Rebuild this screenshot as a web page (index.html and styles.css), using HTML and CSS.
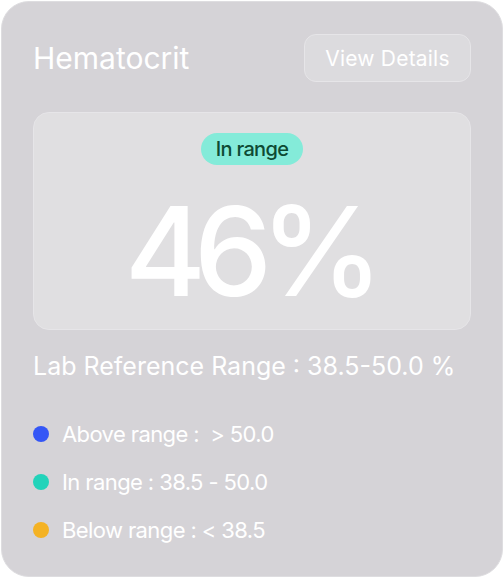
FILE: index.html
```html
<!DOCTYPE html>
<html>
<head>
<meta charset="utf-8">
<link rel="stylesheet" href="styles.css">
</head>
<body>
<div class="card">
  <div class="header">
    <h1 class="title">Hematocrit</h1>
    <button class="details">View Details</button>
  </div>
  <div class="value-box">
    <span class="badge">In range</span>
    <div class="value">46%</div>
  </div>
  <div class="ref">Lab Reference Range : 38.5-50.0 %</div>
  <ul class="legend">
    <li><span class="dot dot-above"></span>Above range :&nbsp; &gt; 50.0</li>
    <li><span class="dot dot-in"></span>In range : 38.5 - 50.0</li>
    <li><span class="dot dot-below"></span>Below range : &lt; 38.5</li>
  </ul>
</div>
</body>
</html>
```
FILE: styles.css
```css
* { box-sizing: border-box; }
html, body { margin: 0; padding: 0; background: #ffffff; }
body { font-family: Inter, "Noto Sans", sans-serif; padding: 1px; }
.card {
  width: 502px;
  height: 576px;
  background: #d5d3d7;
  border: 1px solid #dedde0;
  border-radius: 28px;
  padding: 30px 31px 0 31px;
  color: #ffffff;
}
.header {
  display: flex;
  justify-content: space-between;
  align-items: center;
  height: 52px;
}
.title {
  margin: 0;
  font-size: 30px;
  font-weight: 400;
  letter-spacing: 0;
  color: #ffffff;
}
.details {
  font-family: inherit;
  width: 167px;
  height: 48px;
  background: #dcdbde;
  border: 1.5px solid #e6e5e8;
  border-radius: 12px;
  color: #ffffff;
  font-size: 21px;
  letter-spacing: 0.2px;
  font-weight: 400;
  padding: 0;
}
.value-box {
  margin-top: 28px;
  height: 218px;
  background: #e0dfe1;
  border: 1.5px solid #e6e5e8;
  border-radius: 16px;
  display: flex;
  flex-direction: column;
  align-items: center;
  padding-top: 20px;
}
.badge {
  background: #84ebd9;
  color: #0e4a33;
  font-size: 20px;
  font-weight: 500;
  letter-spacing: -0.7px;
  border-radius: 16px;
  height: 32px;
  line-height: 32px;
  padding: 0 15px;
}
.value {
  font-size: 124px;
  line-height: 1;
  letter-spacing: -12px;
  margin-top: 24px;
  margin-right: 8px;
  font-weight: 500;
  color: #ffffff;
}
.ref {
  margin-top: 20px;
  font-size: 25px;
  letter-spacing: 0;
  line-height: 32px;
}
.legend {
  list-style: none;
  margin: 37px 0 0 0;
  padding: 0;
  display: flex;
  flex-direction: column;
  gap: 18px;
}
.legend li {
  display: flex;
  align-items: center;
  font-size: 22px;
  letter-spacing: -0.6px;
  line-height: 30px;
}
.dot {
  width: 16px;
  height: 16px;
  border-radius: 50%;
  margin-right: 13px;
  flex: none;
}
.dot-above { background: #3456f6; }
.dot-in { background: #22d3ba; }
.dot-below { background: #f4b224; }
```
